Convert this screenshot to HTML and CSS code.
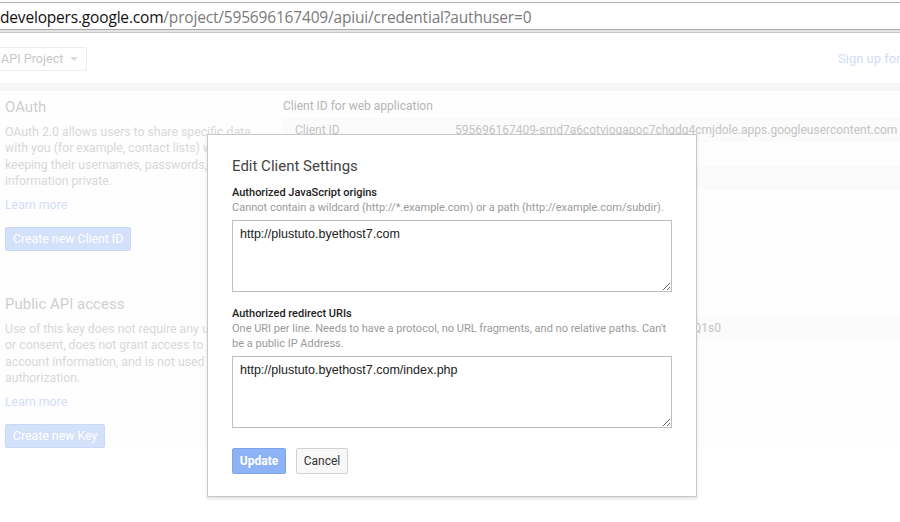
FILE: index.html
```html
<!DOCTYPE html>
<html>
<head>
<meta charset="utf-8">
<link rel="stylesheet" href="styles.css">
</head>
<body>
<div class="addressbar">
  <div class="url"><span class="host">developers.google.com</span><span class="path">/project/595696167409/apiui/credential?authuser=0</span></div>
</div>
<div class="page">
  <div class="topbar">
    <div class="project-btn">API Project <span class="caret"></span></div>
    <div class="signup">Sign up for</div>
  </div>
  <div class="band"></div>
  <div class="content">
    <div class="leftcol">
      <section class="block">
        <h2 class="block-title">OAuth</h2>
        <p class="block-text">OAuth 2.0 allows users to share specific data with you (for example, contact lists) while keeping their usernames, passwords, and other information private.</p>
        <a class="learn">Learn more</a>
        <div class="faded-btn">Create new Client ID</div>
      </section>
      <section class="block block-second">
        <h2 class="block-title">Public API access</h2>
        <p class="block-text">Use of this key does not require any user action<br>or consent, does not grant access to any<br>account information, and is not used for<br>authorization.</p>
        <a class="learn">Learn more</a>
        <div class="faded-btn">Create new Key</div>
      </section>
    </div>
    <div class="rightcol">
      <div class="table-title">Client ID for web application</div>
      <div class="row shaded"><span class="row-label">Client ID</span><span class="row-value">595696167409-srnd7a6cotviogapoc7chgdg4cmjdole.apps.googleusercontent.com</span></div>
      <div class="row"><span class="row-label">Email address</span><span class="row-value">595696167409@developer</span></div>
      <div class="row shaded"><span class="row-label">Client secret</span><span class="row-value">xKq3Lm</span></div>
      <div class="row"><span class="row-label">Redirect URIs</span><span class="row-value">http://plustuto</span></div>
      <div class="row"><span class="row-label">JavaScript origins</span><span class="row-value">http://plustuto</span></div>
      <div class="table-title second">Key for browser applications</div>
      <div class="row shaded"><span class="row-label">API key</span><span class="row-value">AIzaSyBqf7Hk2LmQw9x4RcT8vJnYd3Pe5ZaQ1s0</span></div>
    </div>
  </div>

  <div class="dialog">
    <h1 class="dialog-title">Edit Client Settings</h1>
    <div class="field">
      <div class="field-label">Authorized JavaScript origins</div>
      <div class="field-hint">Cannot contain a wildcard (http://*.example.com) or a path (http://example.com/subdir).</div>
      <textarea class="field-input">http://plustuto.byethost7.com</textarea>
    </div>
    <div class="field">
      <div class="field-label">Authorized redirect URIs</div>
      <div class="field-hint">One URI per line. Needs to have a protocol, no URL fragments, and no relative paths. Can't be a public IP Address.</div>
      <textarea class="field-input">http://plustuto.byethost7.com/index.php</textarea>
    </div>
    <div class="actions">
      <button class="btn btn-primary">Update</button>
      <button class="btn btn-plain">Cancel</button>
    </div>
  </div>
</div>
</body>
</html>
```
FILE: styles.css
```css
html, body {
  margin: 0;
  padding: 0;
  width: 900px;
  height: 522px;
  overflow: hidden;
  background: #ffffff;
}
body {
  font-family: Roboto, "Liberation Sans", Arial, sans-serif;
}

.addressbar {
  margin-top: 2px;
  height: 26px;
  border-top: 1px solid #b4b4b4;
  border-bottom: 1px solid #a8a8a8;
  box-shadow: 0 2px 0 #e4e4e4, 0 3px 0 #c4c4c4;
  display: flex;
  align-items: center;
}
.url {
  font-family: "Open Sans", "Noto Sans", sans-serif;
  font-size: 15.5px;
  white-space: nowrap;
  letter-spacing: -0.18px;
  padding-top: 1px;
}
.host { color: #111; }
.path { color: #7a7a7a; }

.page {
  position: relative;
  margin-top: 3px;
}

.topbar {
  height: 50px;
  display: flex;
  align-items: center;
}
.project-btn {
  margin-left: -10px;
  height: 22px;
  padding: 0 8px 0 10px;
  border: 1px solid #eeeeee;
  border-radius: 2px;
  font-size: 12.6px;
  color: #c8c8c8;
  display: flex;
  align-items: center;
  gap: 4px;
  margin-top: 1px;
}
.caret {
  width: 0;
  height: 0;
  border-left: 4px solid transparent;
  border-right: 4px solid transparent;
  border-top: 4px solid #dadada;
  margin-left: 3px;
}
.signup {
  margin-left: auto;
  width: 62px;
  white-space: nowrap;
  font-size: 13px;
  color: #d3dbf7;
}

.band {
  height: 8px;
  background: #f7f7f7;
}

.content {
  display: flex;
  padding-left: 5px;
  background: #fefefe;
}
.leftcol {
  width: 269px;
  flex: none;
}
.block {
  padding-top: 7px;
}
.block-second {
  padding-top: 44px;
}
.block-title {
  margin: 0;
  font-size: 15px;
  font-weight: 400;
  line-height: 18px;
  color: #cfcfcf;
}
.block-text {
  margin: 8px 0 0 0;
  font-size: 12.3px;
  line-height: 16.3px;
  color: #d8d8d8;
}
.learn {
  display: block;
  margin-top: 8px;
  font-size: 12.3px;
  line-height: 16px;
  color: #d2dcf8;
}
.faded-btn {
  display: inline-block;
  margin-top: 14px;
  height: 22px;
  line-height: 22px;
  padding: 0 7px;
  background: #d3e1fb;
  border: 1px solid #c9d9f8;
  border-radius: 2px;
  color: #ffffff;
  font-size: 12.3px;
}

.rightcol {
  margin-left: 9px;
  flex: 1;
  min-width: 0;
  white-space: nowrap;
}
.table-title {
  font-size: 12px;
  color: #b5b5b5;
  line-height: 16px;
  padding-top: 7px;
  height: 20px;
}
.table-title.second {
  padding-top: 54px;
  height: 24px;
}
.row {
  height: 24px;
  line-height: 24px;
  display: flex;
  font-size: 12px;
  color: #c4c4c4;
}
.row.shaded {
  background: #fbfbfb;
}
.row-label {
  width: 172px;
  flex: none;
  padding-left: 12px;
  box-sizing: border-box;
}

.dialog {
  position: absolute;
  left: 207px;
  top: 101px;
  width: 490px;
  height: 363px;
  box-sizing: border-box;
  background: #ffffff;
  border: 1px solid #c8c8c8;
  box-shadow: 0 2px 3px rgba(0, 0, 0, 0.12);
  padding: 21px 24px 24px 24px;
}
.dialog-title {
  margin: 0;
  font-size: 15px;
  font-weight: 400;
  line-height: 20px;
  color: #444444;
}
.field {
  margin-top: 10px;
}
.field + .field {
  margin-top: 15px;
}
.field-label {
  font-size: 11px;
  font-weight: 500;
  line-height: 14px;
  color: #222222;
}
.field-hint {
  font-size: 11px;
  line-height: 15px;
  color: #9a9a9a;
}
.field-input {
  display: block;
  margin-top: 5px;
  width: 440px;
  height: 72px;
  box-sizing: border-box;
  border: 1px solid #bfbfbf;
  border-radius: 0;
  padding: 5px 7px;
  font-family: "Liberation Sans", Arial, sans-serif;
  font-size: 12.5px;
  line-height: 16px;
  color: #222222;
  background: #ffffff;
  resize: both;
}
.actions {
  margin-top: 20px;
  display: flex;
  gap: 10px;
}
.btn {
  height: 26px;
  box-sizing: border-box;
  border-radius: 2px;
  font-family: Roboto, Arial, sans-serif;
  font-size: 12px;
  padding: 0 6px;
}
.btn-primary {
  width: 54px;
  background: #8db3f6;
  border: 1px solid #7ba4ec;
  color: #ffffff;
  font-weight: 700;
}
.btn-plain {
  width: 52px;
  background: #f8f8f8;
  border: 1px solid #d2d2d2;
  color: #333333;
}
```
